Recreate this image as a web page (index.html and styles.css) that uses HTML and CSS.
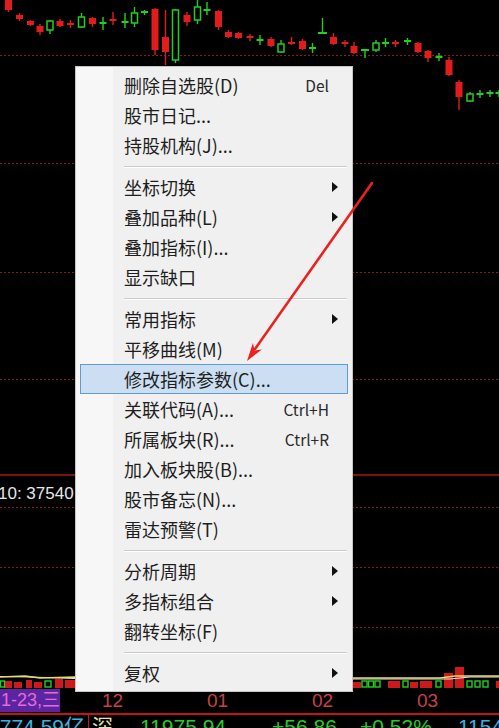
FILE: index.html
```html
<!DOCTYPE html>
<html lang="zh-CN">
<head>
<meta charset="utf-8">
<title>右键菜单</title>
<link rel="stylesheet" href="styles.css">
</head>
<body>
<div class="screen">
  <div class="chart">
    <svg class="plot" width="499" height="688" viewBox="0 0 499 688">
      <g stroke="#8c1c1c" stroke-width="1" stroke-dasharray="2 2">
        <line x1="0" y1="55.5" x2="499" y2="55.5"/>
        <line x1="0" y1="163.5" x2="499" y2="163.5"/>
        <line x1="0" y1="272.5" x2="499" y2="272.5"/>
        <line x1="0" y1="379.5" x2="499" y2="379.5"/>
        <line x1="0" y1="507.5" x2="499" y2="507.5"/>
        <line x1="0" y1="567.5" x2="499" y2="567.5"/>
        <line x1="0" y1="627.5" x2="499" y2="627.5"/>
      </g>
      <line x1="0" y1="475" x2="499" y2="475" stroke="#a81818" stroke-width="1.5"/>
      <g stroke="#e01c1c" stroke-width="1.4">
        <line x1="8.5" y1="-2" x2="8.5" y2="12"/><line x1="19.5" y1="13" x2="19.5" y2="21"/>
        <line x1="30.5" y1="20" x2="30.5" y2="26"/><line x1="40" y1="24" x2="40" y2="35"/>
        <line x1="60" y1="19" x2="60" y2="27"/><line x1="92.5" y1="17" x2="92.5" y2="27"/>
        <line x1="155" y1="8" x2="155" y2="55"/><line x1="165.5" y1="10" x2="165.5" y2="65"/>
        <line x1="187" y1="12" x2="187" y2="26"/><line x1="218.5" y1="10" x2="218.5" y2="30"/>
        <line x1="228.5" y1="30" x2="228.5" y2="38"/><line x1="238.5" y1="32" x2="238.5" y2="39"/>
        <line x1="271" y1="37" x2="271" y2="47"/><line x1="302.5" y1="39" x2="302.5" y2="50"/>
        <line x1="333.5" y1="33" x2="333.5" y2="45"/><line x1="354" y1="42" x2="354" y2="54"/>
        <line x1="418" y1="42" x2="418" y2="53"/><line x1="428" y1="50" x2="428" y2="62"/>
        <line x1="449" y1="57" x2="449" y2="76"/><line x1="459" y1="80" x2="459" y2="110"/>
        <line x1="70.5" y1="20" x2="70.5" y2="28"/><line x1="113" y1="12" x2="113" y2="25"/>
        <line x1="250" y1="34" x2="250" y2="41"/><line x1="291.5" y1="37" x2="291.5" y2="45"/>
        <line x1="345" y1="40" x2="345" y2="47"/><line x1="395.5" y1="40" x2="395.5" y2="47"/>
      </g>
      <g fill="#e01c1c">
        <rect x="5" y="-2" width="7" height="12"/><rect x="16" y="15" width="7" height="4"/>
        <rect x="27" y="21" width="7" height="4"/><rect x="36.5" y="26" width="7" height="6"/>
        <rect x="56.5" y="21" width="7" height="5"/><rect x="89" y="18" width="7" height="6"/>
        <rect x="151.5" y="9" width="7" height="41"/><rect x="162" y="37" width="7" height="15"/>
        <rect x="183.5" y="15" width="7" height="7"/><rect x="215" y="11" width="7" height="16"/>
        <rect x="225" y="32" width="7" height="5"/><rect x="235" y="33" width="7" height="5"/>
        <rect x="267.5" y="39" width="7" height="7"/><rect x="299" y="41" width="7" height="8"/>
        <rect x="330" y="37" width="7" height="7"/><rect x="350.5" y="46" width="7" height="7"/>
        <rect x="414.5" y="43" width="7" height="9"/><rect x="424.5" y="51" width="7" height="7"/>
        <rect x="445.5" y="60" width="7" height="15"/><rect x="455.5" y="82" width="7" height="15"/>
        <rect x="67" y="23" width="7" height="2"/><rect x="109.5" y="19" width="7" height="2"/>
        <rect x="246.5" y="36" width="7" height="2"/><rect x="288" y="42" width="7" height="2"/>
        <rect x="341.5" y="42" width="7" height="2"/><rect x="392" y="42" width="7" height="2"/>
      </g>
      <g stroke="#22d022" stroke-width="1.4">
        <line x1="50" y1="20" x2="50" y2="34"/><line x1="81.5" y1="13" x2="81.5" y2="28"/>
        <line x1="134.5" y1="7" x2="134.5" y2="27"/><line x1="175.5" y1="9" x2="175.5" y2="63"/>
        <line x1="197.5" y1="0" x2="197.5" y2="24"/><line x1="281" y1="40" x2="281" y2="53"/>
        <line x1="376" y1="40" x2="376" y2="52"/><line x1="470" y1="92" x2="470" y2="102"/>
        <line x1="103" y1="17" x2="103" y2="30"/><line x1="125" y1="13" x2="125" y2="28"/>
        <line x1="144.5" y1="10" x2="144.5" y2="15"/><line x1="207" y1="2" x2="207" y2="15"/>
        <line x1="260" y1="35" x2="260" y2="45"/><line x1="312.5" y1="43" x2="312.5" y2="53"/>
        <line x1="385.5" y1="38" x2="385.5" y2="47"/><line x1="407.5" y1="38" x2="407.5" y2="45"/>
        <line x1="439" y1="53" x2="439" y2="61"/><line x1="480" y1="90" x2="480" y2="98"/>
        <line x1="490" y1="90" x2="490" y2="97"/><line x1="499" y1="90" x2="499" y2="97"/>
        <line x1="322.5" y1="18" x2="322.5" y2="33"/><line x1="365" y1="50" x2="365" y2="58"/>
      </g>
      <g stroke="#22d022" stroke-width="2">
        <line x1="99.5" y1="23" x2="106.5" y2="23"/><line x1="121.5" y1="22" x2="128.5" y2="22"/>
        <line x1="141" y1="12" x2="148" y2="12"/><line x1="203.5" y1="10" x2="210.5" y2="10"/>
        <line x1="256.5" y1="40" x2="263.5" y2="40"/><line x1="309" y1="48" x2="316" y2="48"/>
        <line x1="382" y1="43" x2="389" y2="43"/><line x1="404" y1="41" x2="411" y2="41"/>
        <line x1="435.5" y1="57" x2="442.5" y2="57"/><line x1="476.5" y1="94" x2="483.5" y2="94"/>
        <line x1="486.5" y1="93" x2="493.5" y2="93"/><line x1="495.5" y1="93" x2="502" y2="93"/>
        <line x1="318" y1="33" x2="327" y2="33"/><line x1="361" y1="50" x2="369" y2="50"/>
      </g>
      <g stroke="#22d022" stroke-width="1.5" fill="#000">
        <rect x="47" y="21" width="6" height="9"/><rect x="78.5" y="17" width="6" height="10"/>
        <rect x="131.5" y="13" width="6" height="10"/><rect x="172.5" y="10" width="6" height="50"/>
        <rect x="194.5" y="7" width="6" height="13"/><rect x="278" y="44" width="6" height="8"/>
        <rect x="373" y="43" width="6" height="7"/><rect x="467" y="94" width="6" height="7"/>
      </g>
      <g fill="#cc1a1a">
        <rect x="4" y="681" width="8" height="7"/><rect x="14" y="682" width="8" height="6"/>
        <rect x="26" y="680" width="6" height="8"/><rect x="34" y="682" width="8" height="6"/>
        <rect x="55" y="679" width="8" height="9"/><rect x="65" y="680" width="10" height="8"/>
        <rect x="352" y="682" width="9" height="6"/><rect x="388" y="681" width="12" height="7"/>
        <rect x="410" y="682" width="8" height="6"/><rect x="420" y="681" width="12" height="7"/>
        <rect x="444" y="673" width="9" height="15"/><rect x="455" y="667" width="9" height="21"/>
        <rect x="496" y="681" width="4" height="7"/>
      </g>
      <polyline points="0,676.5 30,677 75,678.5 352,679 450,679 470,677 499,677" fill="none" stroke="#e8e8e8" stroke-width="1"/>
      <polyline points="0,677 25,676 40,678 75,677 352,678 440,678 455,676 499,676" fill="none" stroke="#e6dc6a" stroke-width="1.5"/>
      <g stroke="#22d022" stroke-width="1.4" fill="#000">
        <rect x="0.5" y="681" width="4" height="6"/><rect x="45" y="681" width="6" height="6"/>
        <rect x="362" y="681" width="5" height="6"/><rect x="368.5" y="681" width="5" height="6"/>
        <rect x="375" y="681" width="5" height="6"/><rect x="403" y="681" width="5" height="6"/>
        <rect x="436" y="681" width="5" height="6"/><rect x="467" y="681" width="5" height="6"/>
        <rect x="475" y="681" width="5" height="6"/><rect x="483" y="681" width="5" height="6"/>
      </g>
    </svg>
    <span class="readout">10: 37540</span>
  </div>

  <div class="axis">
    <span class="date-box">1-23,三</span>
    <span class="tick">12</span>
    <span class="tick">01</span>
    <span class="tick">02</span>
    <span class="tick">03</span>
  </div>
  <div class="rule"></div>
  <div class="status">
    <span class="s-amt">774.59亿</span>
    <span class="s-div"></span>
    <span class="s-mkt">深</span>
    <span class="s-idx">11975.94</span>
    <span class="s-chg">+56.86</span>
    <span class="s-pct">+0.52%</span>
    <span class="s-vol">1154</span>
  </div>

  <div class="menu">
    <div class="item"><span class="label">删除自选股(D)</span><span class="key">Del</span><span class="sub"></span></div>
    <div class="item"><span class="label">股市日记...</span><span class="key"></span><span class="sub"></span></div>
    <div class="item"><span class="label">持股机构(J)...</span><span class="key"></span><span class="sub"></span></div>
    <div class="sep"></div>
    <div class="item"><span class="label">坐标切换</span><span class="key"></span><span class="sub more"></span></div>
    <div class="item"><span class="label">叠加品种(L)</span><span class="key"></span><span class="sub more"></span></div>
    <div class="item"><span class="label">叠加指标(I)...</span><span class="key"></span><span class="sub"></span></div>
    <div class="item"><span class="label">显示缺口</span><span class="key"></span><span class="sub"></span></div>
    <div class="sep"></div>
    <div class="item"><span class="label">常用指标</span><span class="key"></span><span class="sub more"></span></div>
    <div class="item"><span class="label">平移曲线(M)</span><span class="key"></span><span class="sub"></span></div>
    <div class="item active"><span class="label">修改指标参数(C)...</span><span class="key"></span><span class="sub"></span></div>
    <div class="item"><span class="label">关联代码(A)...</span><span class="key">Ctrl+H</span><span class="sub"></span></div>
    <div class="item"><span class="label">所属板块(R)...</span><span class="key">Ctrl+R</span><span class="sub"></span></div>
    <div class="item"><span class="label">加入板块股(B)...</span><span class="key"></span><span class="sub"></span></div>
    <div class="item"><span class="label">股市备忘(N)...</span><span class="key"></span><span class="sub"></span></div>
    <div class="item"><span class="label">雷达预警(T)</span><span class="key"></span><span class="sub"></span></div>
    <div class="sep"></div>
    <div class="item"><span class="label">分析周期</span><span class="key"></span><span class="sub more"></span></div>
    <div class="item"><span class="label">多指标组合</span><span class="key"></span><span class="sub more"></span></div>
    <div class="item"><span class="label">翻转坐标(F)</span><span class="key"></span><span class="sub"></span></div>
    <div class="sep"></div>
    <div class="item"><span class="label">复权</span><span class="key"></span><span class="sub more"></span></div>
  </div>

  <svg class="pointer" width="499" height="728" viewBox="0 0 499 728">
    <line x1="372" y1="183" x2="255" y2="349" stroke="#e8231e" stroke-width="2.6" stroke-linecap="round"/>
    <polygon points="247,361 252.9,343.1 254.5,350.4 261.9,349.5" fill="#e8231e"/>
  </svg>
</div>
</body>
</html>
```

FILE: styles.css
```css
* {
  box-sizing: border-box;
  margin: 0;
  padding: 0;
}

html, body {
  background: #000;
}

body {
  width: 499px;
  height: 728px;
  overflow: hidden;
  font-family: "Liberation Sans", "Noto Sans CJK SC", sans-serif;
}

.screen {
  position: relative;
  width: 499px;
  height: 728px;
  overflow: hidden;
  display: flex;
  flex-direction: column;
  background: #000;
}

.chart {
  position: relative;
  height: 688px;
  flex: none;
}

.plot {
  display: block;
}

.readout {
  position: absolute;
  left: -2px;
  top: 484px;
  font-size: 17px;
  line-height: 20px;
  color: #e6e6e6;
  white-space: nowrap;
}

.axis {
  height: 25px;
  flex: none;
  display: grid;
  grid-template-columns: 60px repeat(4, 105px);
  align-items: center;
}

.date-box {
  height: 23px;
  background: #5b24a3;
  color: #e96ad0;
  font-size: 18px;
  line-height: 23px;
  padding-left: 1px;
  white-space: nowrap;
  overflow: hidden;
}

.tick {
  text-align: center;
  color: #c8404a;
  font-size: 19px;
  line-height: 25px;
}

.rule {
  height: 2px;
  flex: none;
  background: #c41414;
}

.status {
  height: 13px;
  flex: none;
  display: flex;
  overflow: hidden;
  font-size: 21px;
  line-height: 24px;
  white-space: nowrap;
}

.status span {
  flex: none;
}

.s-amt {
  width: 88px;
  text-align: right;
  padding-right: 3px;
  color: #36b4e4;
  overflow: hidden;
  direction: rtl;
}

.s-div {
  width: 1px;
  background: #c41414;
}

.s-mkt {
  width: 51px;
  padding-left: 3px;
  color: #e8e2a8;
}

.s-idx {
  width: 132px;
  color: #22d022;
}

.s-chg {
  width: 88px;
  color: #22d022;
}

.s-pct {
  width: 98px;
  color: #22d022;
}

.s-vol {
  color: #36b4e4;
}

/* context menu */
.menu {
  position: absolute;
  left: 75px;
  top: 66px;
  width: 278px;
  padding: 3px 0;
  border: 1px solid #c4c4c4;
  background: linear-gradient(to right, #f7f7f7 37px, #f0f0f0 37px);
  font-family: "Noto Sans CJK SC", sans-serif;
  font-size: 18px;
  color: #1e1e1e;
}

.item {
  display: grid;
  grid-template-columns: 1fr auto 18px;
  align-items: center;
  height: 30px;
  margin: 0 4px;
  padding-left: 43px;
  border: 1px solid transparent;
  line-height: 28px;
  white-space: nowrap;
}

.item.active {
  background: #cbdef2;
  border-color: #5f9bd6;
}

.key {
  font-size: 15.5px;
  color: #2a2a2a;
}

.sub.more::before {
  content: "";
  display: block;
  width: 0;
  height: 0;
  margin-left: 3px;
  border-left: 6px solid #111;
  border-top: 5px solid transparent;
  border-bottom: 5px solid transparent;
}

.sep {
  height: 12px;
  margin: 0 5px 0 48px;
  display: flex;
  align-items: center;
}

.sep::before {
  content: "";
  flex: 1;
  height: 1px;
  background: #cacaca;
  box-shadow: 0 1px 0 #fff;
}

.pointer {
  position: absolute;
  left: 0;
  top: 0;
  pointer-events: none;
}
```
